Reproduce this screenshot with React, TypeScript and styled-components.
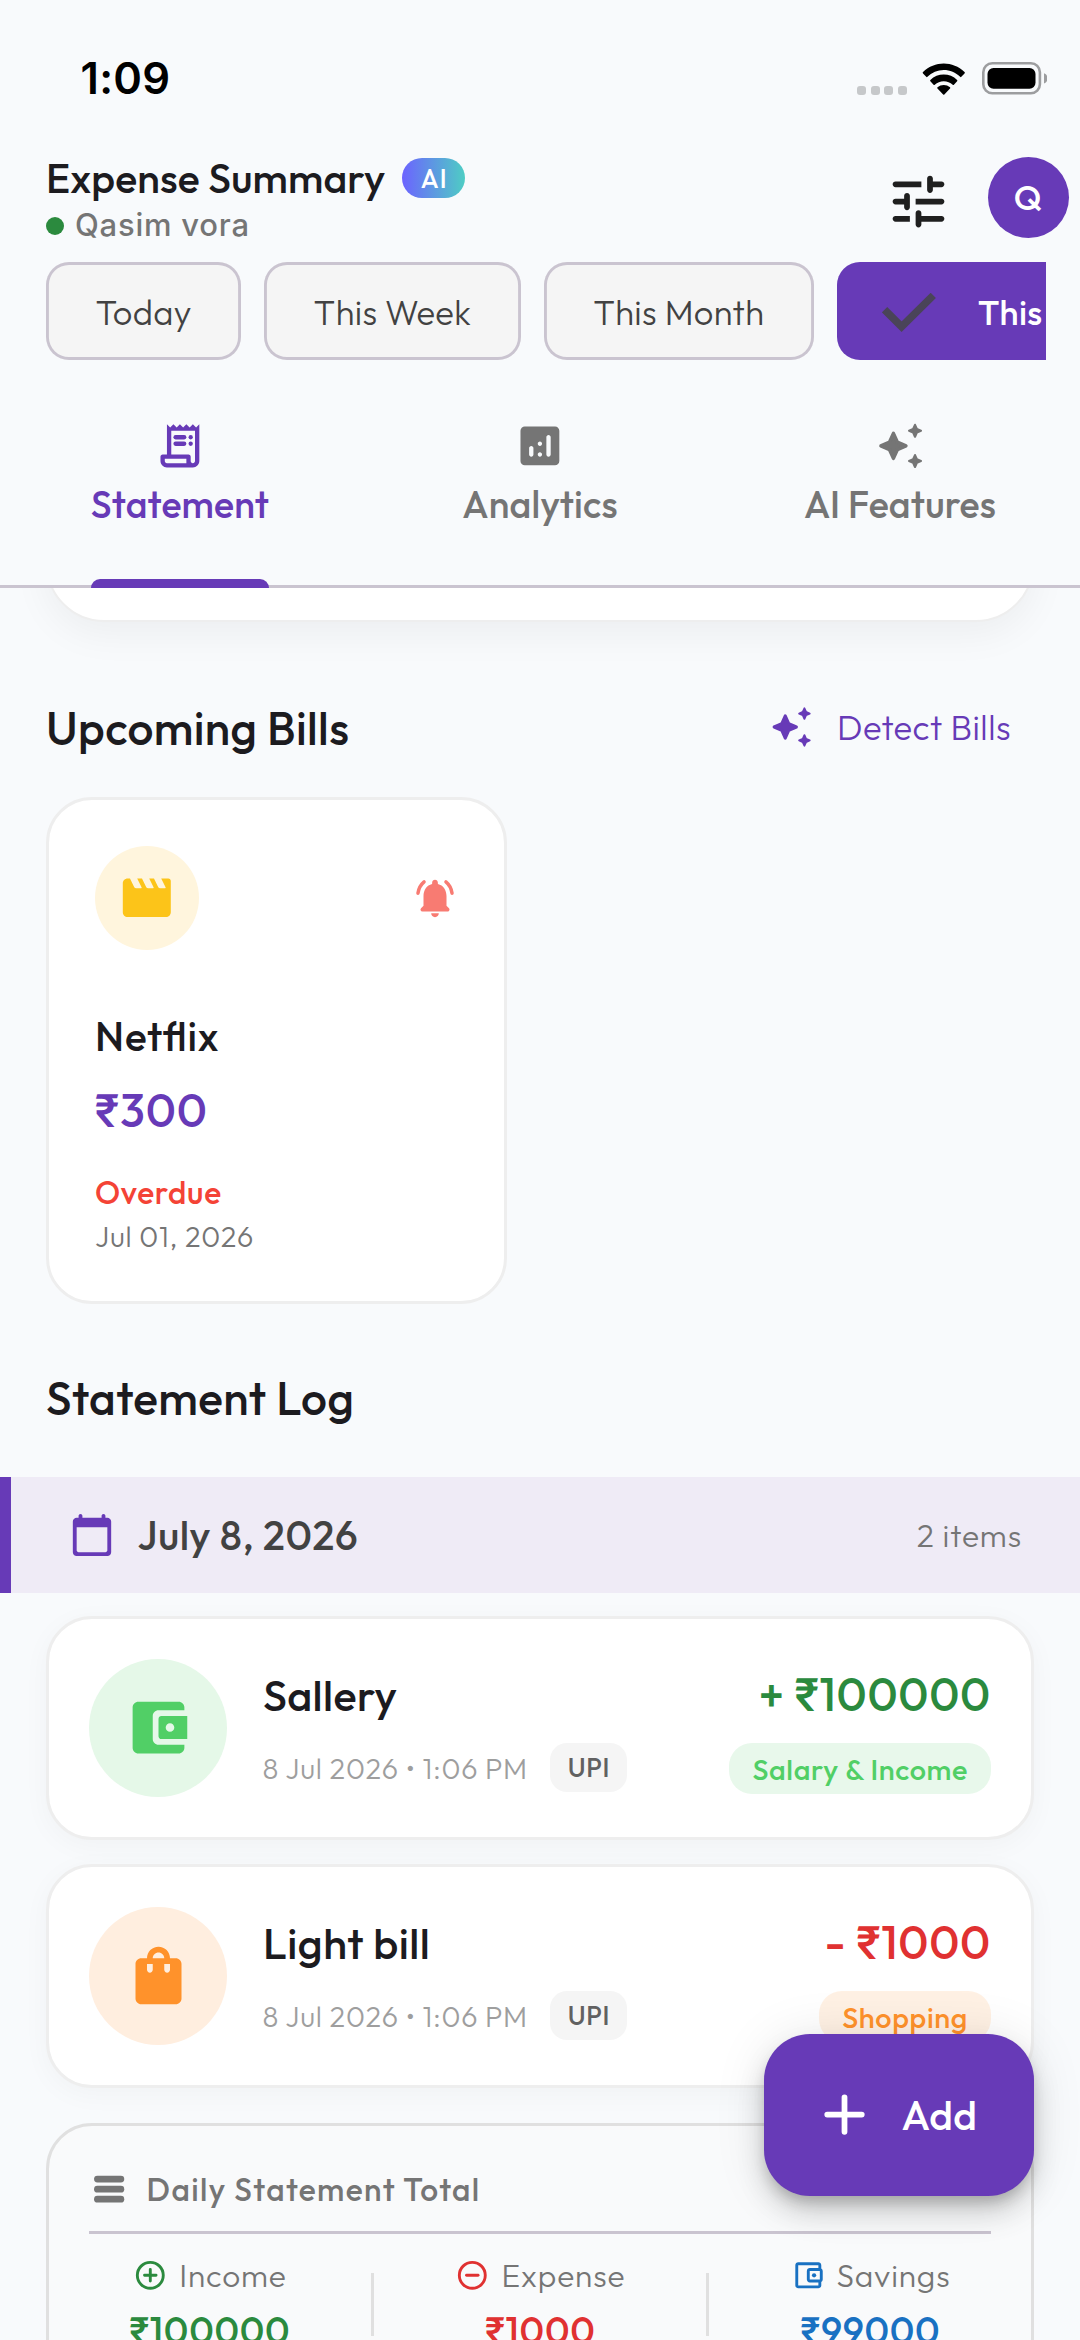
import React from 'react';
import type { ReactNode } from 'react';
import styled, { createGlobalStyle } from 'styled-components';

const color = {
  page: '#f8fafc',
  primary: '#673ab7',
  ink: '#1c1b1f',
  dark: '#424242',
  muted: '#757575',
  faint: '#9e9e9e',
  outline: '#cac4d0',
  hairline: '#eeeeee',
  income: '#2b8a3e',
  expense: '#e03131',
  savings: '#1971c2',
};

const uiFont = "Outfit, Roboto, Lato, 'Noto Sans', sans-serif";
const systemFont = "Inter, Roboto, 'Liberation Sans', sans-serif";

const GlobalStyle = createGlobalStyle`
  *, *::before, *::after { box-sizing: border-box; }
  body {
    margin: 0;
    background: ${color.page};
    font-family: ${uiFont};
    color: ${color.ink};
    font-feature-settings: 'liga' 1;
  }
  svg { display: block; flex: none; }
`;

const Screen = styled.div`
  position: relative;
  width: 1080px;
  height: 2340px;
  overflow: hidden;
  display: flex;
  flex-direction: column;
  background: ${color.page};
`;

/* ---------- Status bar ---------- */

const StatusBar = styled.div`
  flex: none;
  height: 152px;
  display: flex;
  justify-content: space-between;
  align-items: flex-start;
  padding: 52px 33px 0 80.6px;
`;

const Clock = styled.div`
  font: 600 43.5px/52px ${systemFont};
  letter-spacing: 0.2px;
  color: #000;
`;

const StatusIcons = styled.div`
  display: flex;
  align-items: flex-end;
  height: 32.5px;
  margin-top: 10px;
`;

const SignalDots = styled.div`
  display: flex;
  gap: 4.5px;
  margin-right: 15px;
`;

const SignalDot = styled.span`
  width: 9px;
  height: 9px;
  border-radius: 3px;
  background: #c6c8ca;
`;

const WifiIcon = styled.svg`
  width: 43.5px;
  height: 32px;
  margin-right: 16.5px;
`;

/* ---------- Header ---------- */

const Header = styled.header`
  flex: none;
  height: 110px;
  display: flex;
  justify-content: space-between;
  align-items: flex-start;
  padding: 0 11.5px 0 46px;
`;

const TitleRow = styled.div`
  display: flex;
  align-items: center;
  gap: 17px;
`;

const Title = styled.h1`
  margin: 0;
  font-size: 41px;
  line-height: 52px;
  font-weight: 500;
  letter-spacing: 0.15px;
`;

const AiBadge = styled.span`
  display: flex;
  align-items: center;
  justify-content: center;
  width: 62.5px;
  height: 39.5px;
  padding: 2px 0 0 1.5px;
  border-radius: 20px;
  background: linear-gradient(90deg, #6c63ff, #4ecdc4);
  color: #fff;
  font-size: 25.500px;
  line-height: 30px;
  font-weight: 500;
  letter-spacing: 1.3px;
`;

const UserRow = styled.div`
  display: flex;
  align-items: center;
  gap: 11px;
  margin-top: 2px;
`;

const OnlineDot = styled.span`
  width: 18px;
  height: 18px;
  margin-top: 2px;
  border-radius: 50%;
  background: ${color.income};
`;

const UserName = styled.span`
  font: 500 31px/38px ${systemFont};
  letter-spacing: 0.77px;
  color: ${color.muted};
`;

const HeaderActions = styled.div`
  display: flex;
  align-items: center;
  gap: 35px;
  margin-top: 4.5px;
`;

const FilterButton = styled.div`
  padding-top: 9px;
  color: #1f1f1f;
`;

const Avatar = styled.div`
  width: 81px;
  height: 81px;
  border-radius: 50%;
  display: flex;
  align-items: center;
  justify-content: center;
  background: ${color.primary};
  color: #fff;
  font-size: 34.5px;
  font-weight: 500;
`;

/* ---------- Period chips ---------- */

const ChipRow = styled.div`
  flex: none;
  display: flex;
  gap: 23px;
  height: 98px;
  margin: 0 34.5px 0 46px;
  overflow: hidden;
`;

const Chip = styled.div<{ $selected?: boolean }>`
  flex: none;
  display: flex;
  align-items: center;
  gap: 42px;
  padding: 2px 49.5px 0;
  border-radius: 23px;
  font-size: 34.5px;
  font-weight: 300;
  letter-spacing: 0.3px;
  white-space: nowrap;
  ${p =>
    p.$selected
      ? `background: ${color.primary}; color: #fff; font-weight: 500; padding-left: 45.2px;`
      : `background: #f5f5f5; color: ${color.dark}; box-shadow: inset 0 0 0 2.9px ${color.outline};`}
`;

/* ---------- Tabs ---------- */

const TabBar = styled.nav`
  flex: none;
  height: 228px;
  display: grid;
  grid-template-columns: repeat(3, 1fr);
  justify-items: center;
  box-shadow: inset 0 -3px 0 ${color.outline};
`;

const Tab = styled.div<{ $active?: boolean }>`
  display: flex;
  flex-direction: column;
  align-items: center;
  padding-top: 60px;
  color: ${p => (p.$active ? color.primary : color.muted)};
`;

const TabLabel = styled.span`
  margin-top: 9px;
  font-size: 37.5px;
  line-height: 47px;
  font-weight: 500;
  letter-spacing: 0.17px;
`;

const TabIndicator = styled.span`
  width: 100%;
  height: 8.8px;
  margin-top: auto;
  border-radius: 9px 9px 0 0;
  background: ${color.primary};
`;

/* ---------- Scrolling content ---------- */

const Content = styled.main`
  flex: 1;
  min-height: 0;
  overflow: hidden;
  display: flex;
  flex-direction: column;
`;

const SummaryCard = styled.div`
  flex: none;
  height: 200px;
  margin: -166.5px 46px 0;
  border: 2.9px solid #eeeeee;
  border-radius: 58px;
  background: #fff;
  box-shadow: 0 12px 38px rgba(0, 0, 0, 0.05);
`;

const SectionHeader = styled.div<{ $top: number }>`
  flex: none;
  display: flex;
  align-items: center;
  justify-content: space-between;
  margin-top: ${p => p.$top}px;
  padding: 0 69px 0 46px;
`;

const SectionTitle = styled.h2<{ $spacing: number }>`
  margin: 0;
  font-size: 46px;
  line-height: 58px;
  font-weight: 500;
  letter-spacing: ${p => p.$spacing}px;
`;

const DetectLink = styled.div`
  display: flex;
  align-items: center;
  gap: 23px;
  padding-bottom: 2px;
  font-size: 34.5px;
  font-weight: 300;
  letter-spacing: 0.46px;
  line-height: 44px;
  color: ${color.primary};
`;

const BillCard = styled.article`
  flex: none;
  width: 460.5px;
  height: 507px;
  margin: 40px 0 0 46px;
  padding: 46px;
  border: 3px solid ${color.hairline};
  border-radius: 46px;
  background: #fff;
`;

const BillTop = styled.div`
  display: flex;
  align-items: center;
  justify-content: space-between;
`;

const IconDisc = styled.div<{ $size: number; $bg: string; $fg: string }>`
  flex: none;
  display: flex;
  align-items: center;
  justify-content: center;
  width: ${p => p.$size}px;
  height: ${p => p.$size}px;
  border-radius: 50%;
  background: ${p => p.$bg};
  color: ${p => p.$fg};
`;

const Bell = styled.div`
  color: #f87b72;
`;

const BillName = styled.div`
  margin-top: 60px;
  font-size: 40.6px;
  line-height: 52px;
  font-weight: 500;
  letter-spacing: 0.9px;
`;

const BillAmount = styled.div`
  margin-top: 18.5px;
  font-size: 46px;
  line-height: 58px;
  font-weight: 500;
  letter-spacing: 0.9px;
  color: ${color.primary};
`;

const BillStatus = styled.div`
  margin-top: 33.5px;
  font-size: 31.7px;
  line-height: 40px;
  font-weight: 500;
  letter-spacing: 0.71px;
  color: #f44336;
`;

const BillDate = styled.div`
  margin-top: 6px;
  font-size: 28.8px;
  font-weight: 300;
  line-height: 36px;
  letter-spacing: 0.73px;
  color: ${color.muted};
`;

const DayBand = styled.div`
  flex: none;
  display: flex;
  align-items: center;
  height: 115.7px;
  margin-top: 50.6px;
  padding: 0 58px 0 57.6px;
  border-left: 11.5px solid ${color.primary};
  background: #efebf6;
`;

const BandIcon = styled.span`
  color: ${color.primary};
`;

const DayLabel = styled.span`
  margin-left: 23px;
  font-size: 40.4px;
  font-weight: 500;
  letter-spacing: 0.6px;
  color: ${color.dark};
`;

const ItemCount = styled.span`
  margin-left: auto;
  font-size: 31.7px;
  font-weight: 300;
  letter-spacing: 0.9px;
  color: ${color.muted};
`;

const EntryCard = styled.article`
  flex: none;
  display: flex;
  align-items: flex-start;
  height: 224px;
  margin: 23px 46px 1px;
  padding: 40px;
  border: 3px solid ${color.hairline};
  border-radius: 46px;
  background: #fff;
  box-shadow: 0 6px 28px rgba(0, 0, 0, 0.035);
`;

const EntryBody = styled.div`
  margin: 9px 0 0 36px;
`;

const EntryTitle = styled.div<{ $spacing: number }>`
  font-size: 43.2px;
  line-height: 54px;
  font-weight: 500;
  letter-spacing: ${p => p.$spacing}px;
`;

const EntryMeta = styled.div`
  display: flex;
  align-items: center;
  gap: 22.5px;
  margin: 21px 0 0 -0.5px;
`;

const EntryTime = styled.span`
  padding-top: 2px;
  font-size: 28.8px;
  font-weight: 300;
  letter-spacing: 0.74px;
  color: ${color.faint};
`;

const MethodTag = styled.span`
  padding: 0 17.3px;
  border-radius: 17px;
  background: #f5f5f5;
  color: #616161;
  font-size: 25.9px;
  line-height: 49px;
  font-weight: 500;
  letter-spacing: 0.72px;
`;

const EntryRight = styled.div`
  display: flex;
  flex-direction: column;
  align-items: flex-end;
  margin: 6px 0 0 auto;
`;

const EntryAmount = styled.div<{ $color: string }>`
  font-size: 46px;
  line-height: 58px;
  font-weight: 500;
  letter-spacing: 0.76px;
  color: ${p => p.$color};
`;

const CategoryTag = styled.span<{ $bg: string; $fg: string }>`
  margin-top: 20px;
  padding: 1px 23px 0;
  border-radius: 23px;
  background: ${p => p.$bg};
  color: ${p => p.$fg};
  font-size: 28.8px;
  line-height: 50.5px;
  font-weight: 500;
  letter-spacing: 0.65px;
`;

const TotalCard = styled.section`
  flex: none;
  margin: 34px 46px 0;
  padding: 43.5px 40px;
  border: 3px solid #e0e0e0;
  border-radius: 46px;
  background: #f9fafb;
`;

const TotalTitle = styled.div`
  display: flex;
  align-items: center;
  gap: 17.3px;
  padding-bottom: 21.5px;
  border-bottom: 3px solid ${color.outline};
  font-size: 31.7px;
  line-height: 40.3px;
  font-weight: 500;
  letter-spacing: 1.38px;
  color: ${color.muted};
`;

const Stats = styled.div`
  display: flex;
  align-items: center;
  justify-content: space-around;
  margin-top: 21px;
`;

const Stat = styled.div`
  display: flex;
  flex-direction: column;
  align-items: center;
`;

const StatLabel = styled.div<{ $color: string }>`
  display: flex;
  align-items: center;
  gap: 11.5px;
  font-size: 31.7px;
  font-weight: 300;
  line-height: 40px;
  letter-spacing: 0.85px;
  color: ${color.muted};
  svg { color: ${p => p.$color}; }
`;

const StatValue = styled.div<{ $color: string }>`
  margin-top: 12px;
  font-size: 37.5px;
  line-height: 47px;
  font-weight: 500;
  letter-spacing: 0.72px;
  color: ${p => p.$color};
`;

const StatDivider = styled.span`
  width: 3px;
  height: 63px;
  background: #e0e0e0;
`;

const AddButton = styled.div`
  position: absolute;
  right: 46px;
  top: 2034px;
  width: 270.5px;
  height: 161.5px;
  display: flex;
  align-items: center;
  gap: 23px;
  padding-left: 46px;
  border-radius: 46px;
  background: ${color.primary};
  color: #fff;
  font-size: 40.8px;
  font-weight: 500;
  letter-spacing: 0.3px;
  box-shadow: 0 9px 14px -3px rgba(0, 0, 0, 0.2), 0 17px 29px rgba(0, 0, 0, 0.14),
    0 3px 52px rgba(0, 0, 0, 0.1);
`;

/* ---------- Icons ---------- */

const Glyph = ({ size, children }: { size: number; children: ReactNode }) => (
  <svg width={size} height={size} viewBox="0 0 24 24" fill="currentColor">
    {children}
  </svg>
);

const Battery = () => (
  <svg width="65.5" height="32.5" viewBox="0 0 65.5 32.5">
    <rect x="1.3" y="1.3" width="56.6" height="29.9" rx="9" fill="none" stroke="#9c9d9f" strokeWidth="2.6" />
    <rect x="5.5" y="6" width="48" height="20.8" rx="6" fill="#000" />
    <path d="M62 11.2c2.2.8 3.5 2.8 3.5 5.1s-1.300 4.300-3.500 5.100z" fill="#9c9d9f" />
  </svg>
);

const Wifi = () => (
  <WifiIcon viewBox="0 0 17 12" preserveAspectRatio="none">
    <path d="M8.500 2.600c2.400 0 4.700.95 6.400 2.600.13.13.34.13.47 0l1.250-1.300a.35.35 0 0 0 0-.5C12.100-.9 4.900-.9.4 3.400a.35.35 0 0 0 0 .5l1.250 1.300c.13.13.34.13.47 0A9.200 9.200 0 0 1 8.500 2.600z" />
    <path d="M8.500 6.800c1.300 0 2.560.5 3.500 1.360.13.13.34.12.47 0l1.250-1.300a.36.36 0 0 0 0-.5 7.600 7.600 0 0 0-10.450 0 .36.36 0 0 0 0 .5l1.250 1.300c.13.12.34.13.47 0A5.200 5.200 0 0 1 8.500 6.800z" />
    <path d="M10.950 9.600a.35.35 0 0 0 0-.5 3.800 3.800 0 0 0-4.900 0 .35.35 0 0 0 0 .5l2.220 2.250c.13.13.33.13.46 0z" />
  </WifiIcon>
);

const Tune = () => (
  <Glyph size={69}>
    <path d="M3 18c0 .55.45 1 1 1h5v-2H4c-.55 0-1 .45-1 1zM3 6c0 .55.45 1 1 1h9V5H4c-.55 0-1 .45-1 1zm10 14v-1h7c.55 0 1-.45 1-1s-.45-1-1-1h-7v-1c0-.55-.45-1-1-1s-1 .45-1 1v4c0 .55.45 1 1 1s1-.45 1-1zM7 10v1H4c-.55 0-1 .45-1 1s.45 1 1 1h3v1c0 .55.45 1 1 1s1-.45 1-1v-4c0-.55-.45-1-1-1s-1 .45-1 1zm14 2c0-.55-.45-1-1-1h-9v2h9c.55 0 1-.45 1-1zm-5-3c.55 0 1-.45 1-1V7h3c.55 0 1-.45 1-1s-.45-1-1-1h-3V4c0-.55-.45-1-1-1s-1 .45-1 1v4c0 .55.45 1 1 1z" />
  </Glyph>
);

const Check = () => (
  <svg width="54" height="39" viewBox="0 0 54 39" fill="none" stroke="#4a4458" strokeWidth="7.5">
    <path d="M2.600 16.700l17 17L51.300 2.400" />
  </svg>
);

const Receipt = () => (
  <Glyph size={51.8}>
    <path
      fillRule="evenodd"
      d="M19.500 3.500L18 2l-1.500 1.500L15 2l-1.500 1.500L12 2l-1.500 1.500L9 2 7.500 3.500 6 2v14H4c-.55 0-1 .45-1 1v2c0 1.660 1.340 3 3 3h12c1.660 0 3-1.340 3-3V2l-1.500 1.500zM15 20H6c-.55 0-1-.45-1-1v-1h10v2zm4-1c0 .55-.45 1-1 1s-1-.45-1-1v-2c0-.55-.45-1-1-1H8V5h11v14z"
    />
    <rect x="9" y="7" width="6" height="2" rx="1" />
    <rect x="9" y="10" width="6" height="2" rx="1" />
    <circle cx="17" cy="8" r="1" />
    <circle cx="17" cy="11" r="1" />
  </Glyph>
);

const Analytics = () => (
  <Glyph size={51.8}>
    <path d="M19 3H5c-1.100 0-2 .9-2 2v14c0 1.100.9 2 2 2h14c1.100 0 2-.9 2-2V5c0-1.100-.9-2-2-2zM8 17c-.55 0-1-.45-1-1v-3c0-.55.45-1 1-1s1 .45 1 1v3c0 .55-.45 1-1 1zm4 0c-.55 0-1-.45-1-1s.45-1 1-1 1 .45 1 1-.45 1-1 1zm0-5c-.55 0-1-.45-1-1s.45-1 1-1 1 .45 1 1-.45 1-1 1zm4 5c-.55 0-1-.45-1-1V8c0-.55.45-1 1-1s1 .45 1 1v8c0 .55-.45 1-1 1z" />
  </Glyph>
);

const Sparkles = ({ size }: { size: number }) => (
  <Glyph size={size}>
    <g stroke="currentColor" strokeLinejoin="round">
      <path strokeWidth="1.600" d="M9 6.200l1.800 4L14.800 12l-4 1.800L9 17.800l-1.800-4L3.200 12l4-1.800z" />
      <path strokeWidth="1" d="M19 2.250l.85 1.900L21.750 5l-1.900.85L19 7.750l-.85-1.900L16.250 5l1.900-.85z" />
      <path strokeWidth="1" d="M19 16.250l.85 1.900 1.900.85-1.900.85-.85 1.900-.85-1.900-1.900-.85 1.900-.85z" />
    </g>
  </Glyph>
);

const Movie = () => (
  <Glyph size={57.6}>
    <path d="M18 4l1.820 3.640a.25.25 0 0 1-.22.36h-1.980a1 1 0 0 1-.9-.55L15 4h-2l1.820 3.640a.25.25 0 0 1-.22.36h-1.980a1 1 0 0 1-.9-.55L10 4H8l1.820 3.640a.25.25 0 0 1-.22.36H7.620a1 1 0 0 1-.9-.55L5 4H4c-1.100 0-2 .9-2 2v12c0 1.100.9 2 2 2h16c1.100 0 2-.9 2-2V5c0-.55-.45-1-1-1h-3z" />
  </Glyph>
);

const BellRinging = () => (
  <Glyph size={46}>
    <path d="M18 16v-5c0-3.070-1.630-5.640-4.500-6.320V4c0-.83-.67-1.500-1.500-1.500s-1.500.67-1.500 1.500v.68C7.640 5.360 6 7.920 6 11v5l-1.290 1.290c-.63.63-.19 1.710.7 1.710h13.170c.89 0 1.340-1.080.71-1.710L18 16z" />
    <path d="M10 20h4c0 1.100-.9 2-2 2s-2-.9-2-2z" />
    <path
      d="M3.100 9.500c.35-2.400 1.400-4.400 3.200-5.900M20.900 9.500c-.35-2.400-1.400-4.400-3.200-5.900"
      fill="none"
      stroke="currentColor"
      strokeWidth="1.800"
      strokeLinecap="round"
    />
  </Glyph>
);

const Calendar = () => (
  <Glyph size={46}>
    <path d="M20 3h-1V2c0-.55-.45-1-1-1s-1 .45-1 1v1H7V2c0-.55-.45-1-1-1s-1 .45-1 1v1H4c-1.100 0-2 .9-2 2v16c0 1.100.9 2 2 2h16c1.100 0 2-.9 2-2V5c0-1.100-.9-2-2-2zm-1 18H5c-.55 0-1-.45-1-1V8h16v12c0 .55-.45 1-1 1z" />
  </Glyph>
);

const Wallet = () => (
  <Glyph size={69}>
    <path d="M10 16V8c0-1.100.89-2 2-2h9V5c0-1.100-.9-2-2-2H5c-1.110 0-2 .9-2 2v14c0 1.100.89 2 2 2h14c1.100 0 2-.9 2-2v-1h-9c-1.110 0-2-.9-2-2zm3-8c-.55 0-1 .45-1 1v6c0 .55.45 1 1 1h9V8h-9zm3 5.500c-.83 0-1.500-.67-1.500-1.500s.67-1.500 1.500-1.500 1.500.67 1.500 1.500-.67 1.500-1.500 1.500z" />
  </Glyph>
);

const Bag = () => (
  <Glyph size={69}>
    <path d="M18 6h-2c0-2.210-1.790-4-4-4S8 3.790 8 6H6c-1.100 0-2 .9-2 2v12c0 1.100.9 2 2 2h12c1.100 0 2-.9 2-2V8c0-1.100-.9-2-2-2zm-8 4c0 .55-.45 1-1 1s-1-.45-1-1V8h2v2zm2-6c1.100 0 2 .9 2 2h-4c0-1.100.9-2 2-2zm4 6c0 .55-.45 1-1 1s-1-.45-1-1V8h2v2z" />
  </Glyph>
);

const Rows = () => (
  <Glyph size={40.3}>
    <rect x="3" y="4" width="18" height="4" rx="2" />
    <rect x="3" y="10" width="18" height="4" rx="2" />
    <rect x="3" y="16" width="18" height="4" rx="2" />
  </Glyph>
);

const CircleSign = ({ plus }: { plus?: boolean }) => (
  <Glyph size={34.6}>
    <g fill="none" stroke="currentColor" strokeWidth="2" strokeLinecap="round">
      <circle cx="12" cy="12" r="9" />
      <path d={plus ? 'M8 12h8M12 8v8' : 'M8 12h8'} />
    </g>
  </Glyph>
);

const WalletOutline = () => (
  <Glyph size={34.6}>
    <path
      fillRule="evenodd"
      d="M21 7.280V5c0-1.100-.9-2-2-2H5c-1.110 0-2 .9-2 2v14c0 1.100.89 2 2 2h14c1.100 0 2-.9 2-2v-2.280A2 2 0 0 0 22 15V9a2 2 0 0 0-1-1.720zM20 9v6h-7V9h7zM5 19V5h14v2h-6c-1.100 0-2 .9-2 2v6c0 1.100.9 2 2 2h6v2H5z"
    />
    <circle cx="16" cy="12" r="1.500" />
  </Glyph>
);

const Plus = () => (
  <Glyph size={69}>
    <path d="M12 6v12M6 12h12" fill="none" stroke="currentColor" strokeWidth="2" strokeLinecap="round" />
  </Glyph>
);

/* ---------- Data ---------- */

const periods = ['Today', 'This Week', 'This Month'];

const tabs = [
  { label: 'Statement', icon: <Receipt />, active: true },
  { label: 'Analytics', icon: <Analytics /> },
  { label: 'AI Features', icon: <Sparkles size={51.8} /> },
];

const entries = [
  {
    title: 'Sallery',
    spacing: 0.4,
    icon: <Wallet />,
    amount: '+ ₹100000',
    amountColor: color.income,
    category: 'Salary & Income',
    fg: '#51cf66',
    disc: '#e5f8e8',
    tag: '#e8f8eb',
  },
  {
    title: 'Light bill',
    spacing: 0.5,
    icon: <Bag />,
    amount: '- ₹1000',
    amountColor: color.expense,
    category: 'Shopping',
    fg: '#ff922b',
    disc: '#ffeedf',
    tag: '#fff1e4',
  },
];

const totals = [
  { label: 'Income', value: '₹100000', tint: color.income, icon: <CircleSign plus /> },
  { label: 'Expense', value: '₹1000', tint: color.expense, icon: <CircleSign /> },
  { label: 'Savings', value: '₹99000', tint: color.savings, icon: <WalletOutline /> },
];

export default function App() {
  return (
    <Screen>
      <GlobalStyle />
      <StatusBar>
        <Clock>1:09</Clock>
        <StatusIcons>
          <SignalDots>
            <SignalDot />
            <SignalDot />
            <SignalDot />
            <SignalDot />
          </SignalDots>
          <Wifi />
          <Battery />
        </StatusIcons>
      </StatusBar>

      <Header>
        <div>
          <TitleRow>
            <Title>Expense Summary</Title>
            <AiBadge>AI</AiBadge>
          </TitleRow>
          <UserRow>
            <OnlineDot />
            <UserName>Qasim vora</UserName>
          </UserRow>
        </div>
        <HeaderActions>
          <FilterButton>
            <Tune />
          </FilterButton>
          <Avatar>Q</Avatar>
        </HeaderActions>
      </Header>

      <ChipRow>
        {periods.map(period => (
          <Chip key={period}>{period}</Chip>
        ))}
        <Chip $selected>
          <Check />
          This
        </Chip>
      </ChipRow>

      <TabBar>
        {tabs.map(tab => (
          <Tab key={tab.label} $active={tab.active}>
            {tab.icon}
            <TabLabel>{tab.label}</TabLabel>
            {tab.active && <TabIndicator />}
          </Tab>
        ))}
      </TabBar>

      <Content>
        <SummaryCard />

        <SectionHeader $top={77.5}>
          <SectionTitle $spacing={0.37}>Upcoming Bills</SectionTitle>
          <DetectLink>
            <Sparkles size={46} />
            Detect Bills
          </DetectLink>
        </SectionHeader>

        <BillCard>
          <BillTop>
            <IconDisc $size={104} $bg="#fff5dd" $fg="#fcc419">
              <Movie />
            </IconDisc>
            <Bell>
              <BellRinging />
            </Bell>
          </BillTop>
          <BillName>Netflix</BillName>
          <BillAmount>₹300</BillAmount>
          <BillStatus>Overdue</BillStatus>
          <BillDate>Jul 01, 2026</BillDate>
        </BillCard>

        <SectionHeader $top={64.7}>
          <SectionTitle $spacing={0.4}>Statement Log</SectionTitle>
        </SectionHeader>

        <DayBand>
          <BandIcon>
            <Calendar />
          </BandIcon>
          <DayLabel>July 8, 2026</DayLabel>
          <ItemCount>2 items</ItemCount>
        </DayBand>

        {entries.map(entry => (
          <EntryCard key={entry.title}>
            <IconDisc $size={138} $bg={entry.disc} $fg={entry.fg}>
              {entry.icon}
            </IconDisc>
            <EntryBody>
              <EntryTitle $spacing={entry.spacing}>{entry.title}</EntryTitle>
              <EntryMeta>
                <EntryTime>8 Jul 2026 • 1:06 PM</EntryTime>
                <MethodTag>UPI</MethodTag>
              </EntryMeta>
            </EntryBody>
            <EntryRight>
              <EntryAmount $color={entry.amountColor}>{entry.amount}</EntryAmount>
              <CategoryTag $bg={entry.tag} $fg={entry.fg}>
                {entry.category}
              </CategoryTag>
            </EntryRight>
          </EntryCard>
        ))}

        <TotalCard>
          <TotalTitle>
            <Rows />
            Daily Statement Total
          </TotalTitle>
          <Stats>
            {totals.map((total, i) => (
              <React.Fragment key={total.label}>
                {i > 0 && <StatDivider />}
                <Stat>
                  <StatLabel $color={total.tint}>
                    {total.icon}
                    {total.label}
                  </StatLabel>
                  <StatValue $color={total.tint}>{total.value}</StatValue>
                </Stat>
              </React.Fragment>
            ))}
          </Stats>
        </TotalCard>
      </Content>

      <AddButton>
        <Plus />
        Add
      </AddButton>
    </Screen>
  );
}
